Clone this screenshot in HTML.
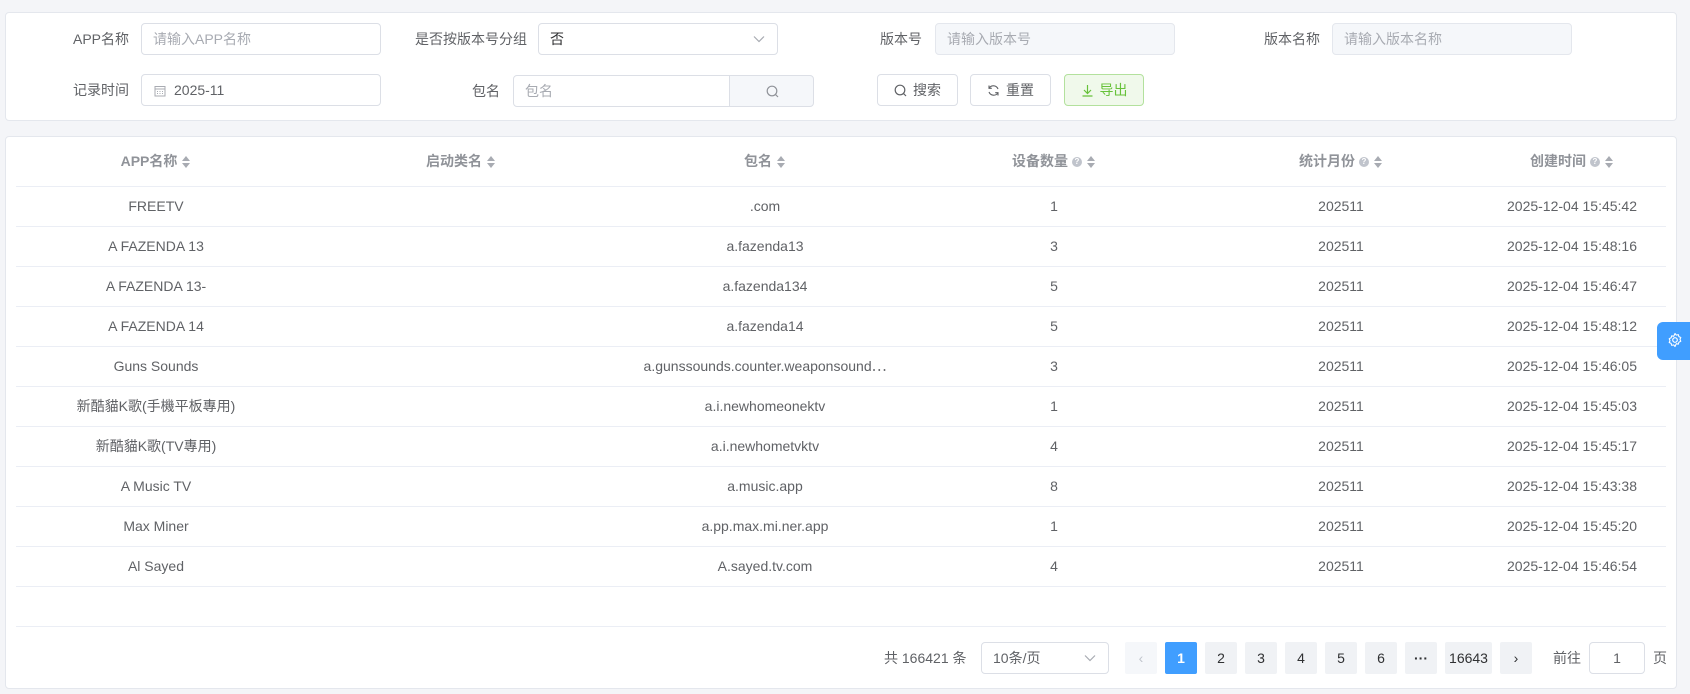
<!DOCTYPE html>
<html><head><meta charset="utf-8"><style>
*{box-sizing:border-box;margin:0;padding:0}
body{width:1690px;height:694px;background:#f4f5f8;font-family:"Liberation Sans","Noto Sans CJK SC",sans-serif;font-size:14px;color:#606266;position:relative;overflow:hidden}
.card{position:absolute;background:#fff;border:1px solid #e4e7ed;border-radius:4px}
.abs{position:absolute}
.lbl{position:absolute;text-align:right;color:#606266;font-size:14px;height:32px;line-height:32px}
.inp{position:absolute;height:32px;border:1px solid #dcdfe6;border-radius:4px;background:#fff;line-height:30px;padding-left:11px;color:#a8abb2;font-size:14px}
.dis{background:#f5f7fa;border-color:#e4e7ed}
.btn{position:absolute;height:32px;border:1px solid #dcdfe6;border-radius:4px;background:#fff;display:flex;align-items:center;justify-content:center;gap:6px;font-size:14px;color:#606266}
table{position:absolute;left:16px;top:136px;width:1650px;border-collapse:collapse;table-layout:fixed}
th,td{text-align:center;padding:0 12px;white-space:nowrap;overflow:hidden;border-bottom:1px solid #ebeef5}
th{height:50px;color:#909399;font-weight:bold;font-size:14px}
td{height:40px;color:#606266}
.sort{display:inline-block;vertical-align:middle;width:10px;height:14px;position:relative;margin-left:4px}
.sort:before{content:"";position:absolute;left:1px;top:1px;border:4px solid transparent;border-bottom:5px solid #a8abb2;border-top:0}
.sort:after{content:"";position:absolute;left:1px;top:8px;border:4px solid transparent;border-top:5px solid #a8abb2;border-bottom:0}
.q{display:inline-block;vertical-align:middle;width:10px;height:10px;border-radius:50%;background:#c0c4cc;color:#fff;font-size:8px;line-height:10px;text-align:center;margin-left:4px}
.pg{position:absolute;top:642px;width:32px;height:32px;background:#f0f2f5;border-radius:2px;text-align:center;line-height:32px;color:#303133;font-size:14px}
</style></head><body>
<div class="card" style="left:5px;top:12px;width:1672px;height:109px"></div>
<div class="lbl" style="left:0;width:129px;top:23px">APP名称</div>
<div class="inp" style="left:141px;top:23px;width:240px">请输入APP名称</div>
<div class="lbl" style="left:380px;width:147px;top:23px">是否按版本号分组</div>
<div class="inp" style="left:538px;top:23px;width:240px;color:#303133">否<svg class="abs" style="right:12px;top:11px" width="12" height="8" viewBox="0 0 12 8"><path d="M1 1.5l5 5 5-5" fill="none" stroke="#a8abb2" stroke-width="1.2"/></svg></div>
<div class="lbl" style="left:800px;width:122px;top:23px">版本号</div>
<div class="inp dis" style="left:935px;top:23px;width:240px">请输入版本号</div>
<div class="lbl" style="left:1200px;width:120px;top:23px">版本名称</div>
<div class="inp dis" style="left:1332px;top:23px;width:240px">请输入版本名称</div>
<div class="lbl" style="left:0;width:129px;top:74px">记录时间</div>
<div class="inp" style="left:141px;top:74px;width:240px;color:#606266;padding-left:12px"><svg style="vertical-align:-2px;margin-right:8px" width="12" height="12" viewBox="0 0 12 12"><rect x="1" y="1.5" width="10" height="9.5" fill="none" stroke="#a8abb2"/><path d="M1 4h10M3 6.5h1M5.5 6.5h1M8 6.5h1M3 8.5h1M5.5 8.5h1M8 8.5h1" stroke="#a8abb2"/></svg>2025-11</div>
<div class="lbl" style="left:420px;width:80px;top:75px">包名</div>
<div class="inp" style="left:513px;top:75px;width:300px;padding-left:11px">包名<div class="abs" style="left:215px;top:-1px;width:85px;height:32px;background:#f5f7fa;border:1px solid #dcdfe6;border-radius:0 4px 4px 0"><svg class="abs" style="left:36px;top:9px" width="13" height="13" viewBox="0 0 13 13"><circle cx="6" cy="6" r="4.8" fill="none" stroke="#909399" stroke-width="1.2"/><path d="M9.5 9.5l2.5 2.5" stroke="#909399" stroke-width="1.2"/></svg></div></div>
<div class="btn" style="left:877px;top:74px;width:81px"><svg width="13" height="13" viewBox="0 0 13 13"><circle cx="6" cy="6" r="4.8" fill="none" stroke="#606266" stroke-width="1.2"/><path d="M9.5 9.5l2.5 2.5" stroke="#606266" stroke-width="1.2"/></svg>搜索</div>
<div class="btn" style="left:970px;top:74px;width:81px"><svg width="13" height="13" viewBox="0 0 13 13"><path d="M11 5A5 5 0 0 0 2.2 4M2 8a5 5 0 0 0 8.8 1M2 1.5V4.3h2.8M11 11.5V8.7H8.2" fill="none" stroke="#606266" stroke-width="1.1"/></svg>重置</div>
<div class="btn" style="left:1064px;top:74px;width:80px;background:#f0f9eb;border-color:#b3e19d;color:#67c23a"><svg width="13" height="13" viewBox="0 0 13 13"><path d="M6.5 1v8M3 6l3.5 3.5L10 6M1.5 12h10" fill="none" stroke="#67c23a" stroke-width="1.2"/></svg>导出</div>

<div class="card" style="left:5px;top:136px;width:1672px;height:553px"></div>
<table>
<colgroup><col style="width:280px"><col style="width:330px"><col style="width:278px"><col style="width:300px"><col style="width:274px"><col style="width:188px"></colgroup>
<tr><th>APP名称<span class="sort"></span></th><th>启动类名<span class="sort"></span></th><th>包名<span class="sort"></span></th><th>设备数量<span class="q">?</span><span class="sort"></span></th><th>统计月份<span class="q">?</span><span class="sort"></span></th><th>创建时间<span class="q">?</span><span class="sort"></span></th></tr>
<tr><td>FREETV</td><td></td><td>.com</td><td>1</td><td>202511</td><td>2025-12-04 15:45:42</td></tr>
<tr><td>A FAZENDA 13</td><td></td><td>a.fazenda13</td><td>3</td><td>202511</td><td>2025-12-04 15:48:16</td></tr>
<tr><td>A FAZENDA 13-</td><td></td><td>a.fazenda134</td><td>5</td><td>202511</td><td>2025-12-04 15:46:47</td></tr>
<tr><td>A FAZENDA 14</td><td></td><td>a.fazenda14</td><td>5</td><td>202511</td><td>2025-12-04 15:48:12</td></tr>
<tr><td>Guns Sounds</td><td></td><td>a.gunssounds.counter.weaponsound⋯</td><td>3</td><td>202511</td><td>2025-12-04 15:46:05</td></tr>
<tr><td>新酷貓K歌(手機平板專用)</td><td></td><td>a.i.newhomeonektv</td><td>1</td><td>202511</td><td>2025-12-04 15:45:03</td></tr>
<tr><td>新酷貓K歌(TV專用)</td><td></td><td>a.i.newhometvktv</td><td>4</td><td>202511</td><td>2025-12-04 15:45:17</td></tr>
<tr><td>A Music TV</td><td></td><td>a.music.app</td><td>8</td><td>202511</td><td>2025-12-04 15:43:38</td></tr>
<tr><td>Max Miner</td><td></td><td>a.pp.max.mi.ner.app</td><td>1</td><td>202511</td><td>2025-12-04 15:45:20</td></tr>
<tr><td>Al Sayed</td><td></td><td>A.sayed.tv.com</td><td>4</td><td>202511</td><td>2025-12-04 15:46:54</td></tr>
</table>
<div class="abs" style="left:16px;top:626px;width:1650px;height:1px;background:#ebeef5"></div>

<div class="abs" style="left:884px;top:642px;line-height:32px;color:#606266">共 166421 条</div>
<div class="inp" style="left:981px;top:642px;width:128px;color:#606266">10条/页<svg class="abs" style="right:12px;top:11px" width="12" height="8" viewBox="0 0 12 8"><path d="M1 1.5l5 5 5-5" fill="none" stroke="#a8abb2" stroke-width="1.2"/></svg></div>
<div class="pg" style="left:1125px;background:#f5f7fa;color:#c0c4cc">‹</div>
<div class="pg" style="left:1165px;background:#409eff;color:#fff;font-weight:bold">1</div>
<div class="pg" style="left:1205px">2</div>
<div class="pg" style="left:1245px">3</div>
<div class="pg" style="left:1285px">4</div>
<div class="pg" style="left:1325px">5</div>
<div class="pg" style="left:1365px">6</div>
<div class="pg" style="left:1405px;font-weight:bold">···</div>
<div class="pg" style="left:1445px;width:47px">16643</div>
<div class="pg" style="left:1500px">›</div>
<div class="abs" style="left:1553px;top:642px;line-height:32px">前往</div>
<div class="inp" style="left:1589px;top:642px;width:56px;text-align:center;padding:0;color:#606266">1</div>
<div class="abs" style="left:1653px;top:642px;line-height:32px">页</div>

<div class="abs" style="left:1657px;top:322px;width:40px;height:38px;background:#409eff;border-radius:6px 0 0 6px"><svg class="abs" style="left:10px;top:10px" width="16" height="16" viewBox="0 0 16 16"><circle cx="8" cy="8" r="2.3" fill="none" stroke="#fff" stroke-width="1.2"/><path d="M8 1.5l1.3 1.6 2-.5.6 2 1.9.9-.8 1.9.8 1.9-1.9.9-.6 2-2-.5L8 14.5l-1.3-1.6-2 .5-.6-2-1.9-.9.8-1.9-.8-1.9 1.9-.9.6-2 2 .5z" fill="none" stroke="#fff" stroke-width="1.1" stroke-linejoin="round"/></svg></div>
</body></html>
